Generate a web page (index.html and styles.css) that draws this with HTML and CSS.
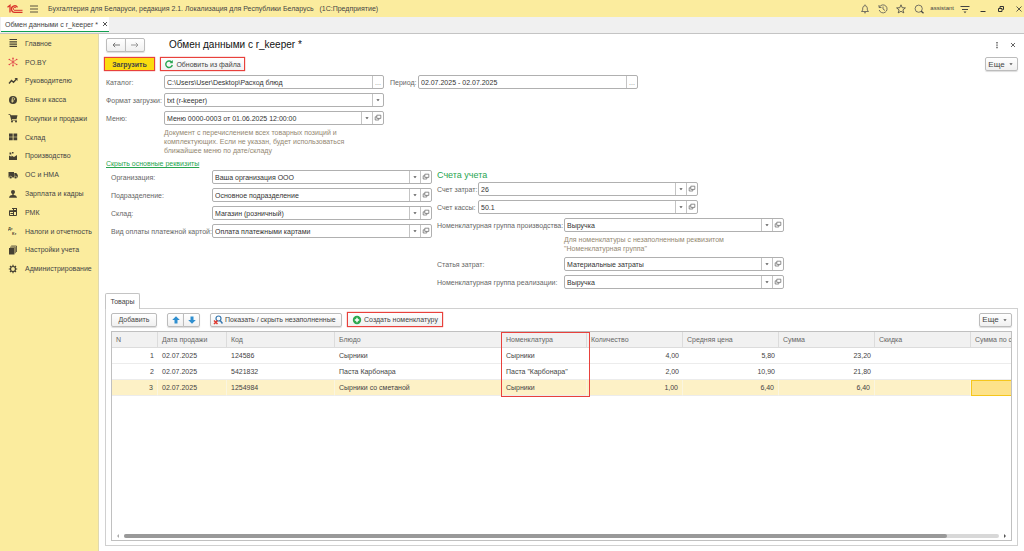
FILE: index.html
```
<!DOCTYPE html>
<html lang="ru">
<head>
    <meta charset="UTF-8">
    <meta name="viewport" content="width=device-width, initial-scale=1.0">
    <title>Обмен данными с r_keeper</title>
    <link rel="stylesheet" href="styles.css">
</head>
<body>

    <!-- Общие значки полей -->
    <svg class="defs" aria-hidden="true">
        <symbol id="arrow" viewBox="0 0 10 10"><path d="M3 4h4L5 6.500z" fill="#555"/></symbol>
        <symbol id="open" viewBox="0 0 10 10"><path d="M3.500 1.500h5v4h-5zM3.500 3.500h-2v4h4.500v-2" fill="none" stroke="#666" stroke-width="0.900"/></symbol>
    </svg>

    <!-- Заголовок приложения -->
    <header class="topbar">
        <svg class="logo" viewBox="0 0 16 10" role="img" aria-label="1С">
            <g fill="none" stroke="#d9332b" stroke-width="1.300">
                <path d="M0.500 3.200L3 1.300V8.500"/>
                <path d="M10.500 3.300A3.300 3.300 0 1 0 8 8.400H15.500"/>
                <path d="M9 4A1.500 1.500 0 1 0 8 6.300H15.500" stroke-width="1"/>
            </g>
        </svg>
        <button class="icon-btn" aria-label="Меню">
            <svg class="icon" viewBox="0 0 10 10"><path d="M1 2h8M1 5h8M1 8h8" stroke="#5a5340" fill="none"/></svg>
        </button>
        <span class="app-title">Бухгалтерия для Беларуси, редакция 2.1. Локализация для Республики Беларусь   (1С:Предприятие)</span>
        <div class="top-tools">
            <button class="icon-btn" aria-label="Уведомления"><svg class="icon" viewBox="0 0 10 10"><path d="M1.500 7.500h7L7.300 6V4Q7 1.800 5 1.600 3 1.800 2.700 4v2zM4 8.500q1 1 2 0M5 .5v1" fill="none" stroke="#555" stroke-width=".8"/></svg></button>
            <button class="icon-btn" aria-label="История"><svg class="icon" viewBox="0 0 10 10"><path d="M1.500 3A4 4 0 1 1 1.200 6M1 1v2.500h2.500M5 2.500V5l2 1.500" fill="none" stroke="#555" stroke-width=".8"/></svg></button>
            <button class="icon-btn" aria-label="Избранное"><svg class="icon" viewBox="0 0 10 10"><path d="M5 .8l1.200 2.900 3.200.2-2.500 2 .9 3L5 7.300 2.200 8.900l.9-3-2.500-2 3.200-.2z" fill="none" stroke="#444" stroke-width=".8"/></svg></button>
            <button class="icon-btn" aria-label="Поиск"><svg class="icon" viewBox="0 0 10 10"><circle cx="4.700" cy="4.700" r="3.600" fill="none" stroke="#555" stroke-width=".8"/><path d="M7 7l2.500 2.300" stroke="#444" stroke-width="1.300"/></svg></button>
            <span class="user">assistant</span>
            <button class="icon-btn" aria-label="Настройки"><svg class="icon" viewBox="0 0 10 10"><path d="M.5 2.500h9M2 5.500h6" stroke="#444"/><path d="M3.500 7.500h3L5 9.300z" fill="#444"/></svg></button>
            <button class="icon-btn" aria-label="Свернуть"><svg class="icon" viewBox="0 0 10 10"><path d="M2.500 7.500h5" stroke="#333"/></svg></button>
            <button class="icon-btn" aria-label="Восстановить"><svg class="icon" viewBox="0 0 10 10"><path d="M2.500 4.500h3.500v3H2.500zM4 4V2.500h3.500v3H6.500" fill="none" stroke="#333"/></svg></button>
            <button class="icon-btn" aria-label="Закрыть"><svg class="icon" viewBox="0 0 10 10"><path d="M2.500 2.500l5 5M7.500 2.500l-5 5" stroke="#333" stroke-width=".8"/></svg></button>
        </div>
    </header>

    <nav class="window-tabs">
        <div class="window-tab">
            <a href="#">Обмен данными с r_keeper *</a>
            <button class="tab-close" aria-label="Закрыть вкладку"><svg viewBox="0 0 6 6"><path d="M1 1l4 4M5 1L1 5" stroke="#555" stroke-width="1"/></svg></button>
        </div>
    </nav>

    <div class="workspace">
        <!-- Разделы -->
        <nav class="sidebar">
            <div class="sections">
                <a href="#"><svg class="icon" viewBox="0 0 10 10"><path d="M1.500 1.500h7.500M1.500 3.800h7.500M1.500 6.100h7.500M1.500 8.400h7.500" stroke="#454033" stroke-width="1.200"/></svg>Главное</a>
                <a href="#"><svg class="icon" viewBox="0 0 10 10"><path d="M5 5V1M5 5l3.500-2.500M5 5l3.500 2.500M5 5v4M5 5L1.500 7.500M5 5L1.500 2.500" stroke="#e0444a" stroke-width=".8"/><g fill="#e0444a"><circle cx="5" cy="1.200" r=".8"/><circle cx="8.700" cy="2.500" r=".8"/><circle cx="8.700" cy="7.500" r=".8"/><circle cx="5" cy="8.800" r=".8"/><circle cx="1.300" cy="7.500" r=".8"/><circle cx="1.300" cy="2.500" r=".8"/></g></svg>PO.BY</a>
                <a href="#"><svg class="icon" viewBox="0 0 10 10"><path d="M1 7.500l2.500-3 2 1.800L8.500 3" fill="none" stroke="#454033" stroke-width="1.300"/><path d="M6.500 2h3v3z" fill="#454033"/></svg>Руководителю</a>
                <a href="#"><svg class="icon" viewBox="0 0 10 10"><circle cx="5" cy="5" r="4" fill="#454033"/><path d="M4.300 7.700V2.700h1.400q1 .2 1 1.200t-1 1.200H3.400M3.400 6.300h2.300" fill="none" stroke="#fbec9e" stroke-width=".7"/></svg>Банк и касса</a>
                <a href="#"><svg class="icon" viewBox="0 0 10 10"><path d="M.5 1h1.700l.5 1.200h6.800L8.600 6H3.800l.2.800h4.800v.7H3.300L1.800 1.800H.5z" fill="#454033"/><circle cx="4" cy="8.500" r="1" fill="#454033"/><circle cx="8" cy="8.500" r="1" fill="#454033"/></svg>Покупки и продажи</a>
                <a href="#"><svg class="icon" viewBox="0 0 10 10"><path d="M1 1.500h3.700v3.200H1zM5.500 1.500h3.700v3.200H5.500zM1 5.300h3.700v3H1zM5.500 5.300h3.700v3H5.500z" fill="#454033"/></svg>Склад</a>
                <a href="#"><svg class="icon" viewBox="0 0 10 10"><path d="M1 9V4.500l2.500 1.200V4.500L6 6l3-2v5zM1.500 1.500h1.800v2H1.500zM4 1h1.500v1.500H4z" fill="#454033"/></svg>Производство</a>
                <a href="#"><svg class="icon" viewBox="0 0 10 10"><path d="M.5 2h5.500v5.500H.5zM6.300 3h2l1.500 2v2.500H6.300z" fill="#454033"/><g fill="#454033" stroke="#fbec9e" stroke-width=".5"><circle cx="2.700" cy="7.500" r="1.300"/><circle cx="7.600" cy="7.500" r="1.300"/></g></svg>ОС и НМА</a>
                <a href="#"><svg class="icon" viewBox="0 0 10 10"><circle cx="5" cy="3" r="2" fill="#454033"/><path d="M4.300 4h1.400v2q3 .3 3.300 2.800H1Q1.300 6.300 4.300 6z" fill="#454033"/></svg>Зарплата и кадры</a>
                <a href="#"><svg class="icon" viewBox="0 0 10 10"><path d="M1.500 4h4v4.500h-4zM4 1.500h4.500v7H4" fill="none" stroke="#454033"/><path d="M1 3.500h7v1.500H1zM5 1h4v3H5zM2.500 6h3.500v1H2.500z" fill="#454033"/><path d="M6 2h2v1H6z" fill="#fbec9e"/></svg>РМК</a>
                <a href="#"><svg class="icon dt" viewBox="0 0 10 10" aria-hidden="true"><text x="0" y="4">Дт</text><text x="4" y="9">Кт</text></svg>Налоги и отчетность</a>
                <a href="#"><svg class="icon" viewBox="0 0 10 10"><path d="M1 3h5.500v6.500H1z" fill="#454033"/><path d="M2 2.200h5.300v6M3.200 1h5.300v6" fill="none" stroke="#454033" stroke-width=".8"/></svg>Настройки учета</a>
                <a href="#"><svg class="icon" viewBox="0 0 10 10"><circle cx="5" cy="5" r="2.500" fill="none" stroke="#454033" stroke-width="1.200"/><path d="M5 .8v1.700M5 7.500v1.700M.8 5h1.700M7.500 5h1.700M2 2l1.200 1.200M6.800 6.800L8 8M8 2L6.800 3.200M3.200 6.800L2 8" stroke="#454033" stroke-width="1.200"/></svg>Администрирование</a>
            </div>
        </nav>

        <main class="form">
            <div class="title-row">
                <div class="btn-group">
                    <button class="btn" aria-label="Назад"><svg class="icon" viewBox="0 0 10 10"><path d="M9 5H2M4.200 2.800L2 5l2.200 2.200" fill="none" stroke="#777"/></svg></button>
                    <button class="btn" aria-label="Вперед"><svg class="icon" viewBox="0 0 10 10"><path d="M1 5h7M5.800 2.800L8 5 5.800 7.200" fill="none" stroke="#999"/></svg></button>
                </div>
                <h1>Обмен данными с r_keeper *</h1>
                <div class="title-tools">
                    <button class="icon-btn" aria-label="Действия"><svg class="icon" viewBox="0 0 10 10"><path d="M4.300 2h1.400v1.400H4.300zM4.300 4.400h1.400v1.400H4.300zM4.300 6.800h1.400v1.400H4.300z" fill="#555"/></svg></button>
                    <button class="icon-btn" aria-label="Закрыть форму"><svg class="icon" viewBox="0 0 10 10"><path d="M3 3l4 4M7 3L3 7" stroke="#666"/></svg></button>
                </div>
            </div>

            <div class="commands">
                <button class="btn primary marked">Загрузить</button>
                <button class="btn refresh marked">
                    <svg class="icon" viewBox="0 0 10 10"><path d="M7.500 3A3.300 3.300 0 1 0 8.300 6" fill="none" stroke="#27a550" stroke-width="1.400"/><path d="M8.800 1v3.300H5.500z" fill="#27a550"/></svg>Обновить из файла
                </button>
                <button class="btn more">Еще <svg class="caret"><use href="#arrow"/></svg></button>
            </div>

            <div class="rows">
                <div class="row">
                    <label class="label-main" for="catalog">Каталог:</label>
                    <div class="field"><input type="text" id="catalog" value="C:\Users\User\Desktop\Расход блюд"><button class="dots" aria-label="Выбрать каталог">...</button></div>
                    <label class="label-period" for="period">Период:</label>
                    <div class="field"><input type="text" id="period" value="02.07.2025 - 02.07.2025"><button class="dots" aria-label="Выбрать период">...</button></div>
                </div>
                <div class="row">
                    <label class="label-main" for="format">Формат загрузки:</label>
                    <div class="field select"><select id="format"><option>txt (r-keeper)</option></select><svg><use href="#arrow"/></svg></div>
                </div>
                <div class="row">
                    <label class="label-main" for="menu">Меню:</label>
                    <div class="field"><input type="text" id="menu" value="Меню 0000-0003 от 01.06.2025 12:00:00"><button aria-label="Список"><svg><use href="#arrow"/></svg></button><button aria-label="Открыть"><svg><use href="#open"/></svg></button></div>
                </div>
            </div>
            <p class="hint hint-menu">Документ с перечислением всех товарных позиций и<br>комплектующих. Если не указан, будет использоваться<br>ближайшее меню по дате/складу</p>
            <a class="toggle" href="#">Скрыть основные реквизиты</a>

            <div class="groups">
                <div class="rows requisites">
                    <div class="row">
                        <label for="org">Организация:</label>
                        <div class="field"><input type="text" id="org" value="Ваша организация ООО"><button aria-label="Список"><svg><use href="#arrow"/></svg></button><button aria-label="Открыть"><svg><use href="#open"/></svg></button></div>
                    </div>
                    <div class="row">
                        <label for="dept">Подразделение:</label>
                        <div class="field"><input type="text" id="dept" value="Основное подразделение"><button aria-label="Список"><svg><use href="#arrow"/></svg></button><button aria-label="Открыть"><svg><use href="#open"/></svg></button></div>
                    </div>
                    <div class="row">
                        <label for="store">Склад:</label>
                        <div class="field"><input type="text" id="store" value="Магазин (розничный)"><button aria-label="Список"><svg><use href="#arrow"/></svg></button><button aria-label="Открыть"><svg><use href="#open"/></svg></button></div>
                    </div>
                    <div class="row">
                        <label for="card">Вид оплаты платежной картой:</label>
                        <div class="field"><input type="text" id="card" value="Оплата платежными картами"><button aria-label="Список"><svg><use href="#arrow"/></svg></button><button aria-label="Открыть"><svg><use href="#open"/></svg></button></div>
                    </div>
                </div>

                <div class="accounts">
                    <h2>Счета учета</h2>
                    <div class="rows">
                        <div class="row">
                            <label class="label-account" for="cost">Счет затрат:</label>
                            <div class="field"><input type="text" id="cost" value="26"><button aria-label="Список"><svg><use href="#arrow"/></svg></button><button aria-label="Открыть"><svg><use href="#open"/></svg></button></div>
                        </div>
                        <div class="row">
                            <label class="label-account" for="cash">Счет кассы:</label>
                            <div class="field"><input type="text" id="cash" value="50.1"><button aria-label="Список"><svg><use href="#arrow"/></svg></button><button aria-label="Открыть"><svg><use href="#open"/></svg></button></div>
                        </div>
                        <div class="row">
                            <label class="label-group" for="prod">Номенклатурная группа производства:</label>
                            <div class="field"><input type="text" id="prod" value="Выручка"><button aria-label="Список"><svg><use href="#arrow"/></svg></button><button aria-label="Открыть"><svg><use href="#open"/></svg></button></div>
                        </div>
                        <p class="hint hint-group">Для номенклатуры с незаполненным реквизитом<br>"Номенклатурная группа"</p>
                        <div class="row">
                            <label class="label-group" for="item">Статья затрат:</label>
                            <div class="field"><input type="text" id="item" value="Материальные затраты"><button aria-label="Список"><svg><use href="#arrow"/></svg></button><button aria-label="Открыть"><svg><use href="#open"/></svg></button></div>
                        </div>
                        <div class="row">
                            <label class="label-group" for="sale">Номенклатурная группа реализации:</label>
                            <div class="field"><input type="text" id="sale" value="Выручка"><button aria-label="Список"><svg><use href="#arrow"/></svg></button><button aria-label="Открыть"><svg><use href="#open"/></svg></button></div>
                        </div>
                    </div>
                </div>
            </div>

            <!-- Табличная часть -->
            <div class="page-tabs"><button class="page-tab">Товары</button></div>
            <section class="panel">
                <div class="toolbar">
                    <button class="btn add">Добавить</button>
                    <div class="btn-group move">
                        <button class="btn" aria-label="Вверх"><svg class="icon" viewBox="0 0 10 10"><path d="M5 1.200l3.800 3.800H6.500v3.500h-3V5H1.200z" fill="#2f8fd0"/></svg></button>
                        <button class="btn" aria-label="Вниз"><svg class="icon" viewBox="0 0 10 10"><path d="M5 8.800L1.200 5h2.300V1.500h3V5h2.300z" fill="#2f8fd0"/></svg></button>
                    </div>
                    <button class="btn filter">
                        <svg class="icon" viewBox="0 0 10 10"><circle cx="5.500" cy="3.500" r="2.500" fill="none" stroke="#3878b0" stroke-width="1.200"/><path d="M7.200 5.500L9.500 8.500" stroke="#3878b0" stroke-width="1.500"/><path d="M1 5.500l3.500 3.500M4.500 5.500L1 9" stroke="#e0392f" stroke-width="1.500"/></svg>Показать / скрыть незаполненные
                    </button>
                    <button class="btn create marked">
                        <svg class="icon" viewBox="0 0 10 10"><circle cx="5" cy="5" r="4.200" fill="#2da84f"/><path d="M5 2.800v4.400M2.800 5h4.400" stroke="#fff" stroke-width="1.400"/></svg>Создать номенклатуру
                    </button>
                    <button class="btn more">Еще <svg class="caret"><use href="#arrow"/></svg></button>
                </div>

                <div class="grid">
                    <table>
                        <colgroup>
                            <col class="c-n"><col class="c-date"><col class="c-code"><col class="c-dish"><col class="c-item">
                            <col class="c-num"><col class="c-num"><col class="c-num"><col class="c-num"><col class="c-num">
                        </colgroup>
                        <thead>
                            <tr><th>N</th><th>Дата продажи</th><th>Код</th><th>Блюдо</th><th class="framed">Номенклатура</th><th>Количество</th><th>Средняя цена</th><th>Сумма</th><th>Скидка</th><th>Сумма по скидке</th></tr>
                        </thead>
                        <tbody>
                            <tr><td class="num">1</td><td>02.07.2025</td><td>124586</td><td>Сырники</td><td>Сырники</td><td class="num">4,00</td><td class="num">5,80</td><td class="num">23,20</td><td></td><td></td></tr>
                            <tr><td class="num">2</td><td>02.07.2025</td><td>5421832</td><td>Паста Карбонара</td><td>Паста "Карбонара"</td><td class="num">2,00</td><td class="num">10,90</td><td class="num">21,80</td><td></td><td></td></tr>
                            <tr class="selected"><td class="num">3</td><td>02.07.2025</td><td>1254984</td><td>Сырники со сметаной</td><td>Сырники</td><td class="num">1,00</td><td class="num">6,40</td><td class="num">6,40</td><td></td><td class="active"></td></tr>
                        </tbody>
                    </table>
                    <div class="scrollbar">
                        <span class="scroll-arrow left"></span>
                        <div class="track"><div class="thumb"></div></div>
                        <span class="scroll-arrow right"></span>
                    </div>
                </div>
            </section>
        </main>
    </div>

</body>
</html>
```
FILE: styles.css
```
* {
    box-sizing: border-box;
}

body {
    margin: 0;
    min-height: 100vh;
    display: flex;
    flex-direction: column;
    font-family: "Liberation Sans", Arial, sans-serif;
    font-size: 7px;
    line-height: 9px;
    color: #444444;
    background-color: #ffffff;
}

button, input, select {
    font: inherit;
    color: inherit;
    margin: 0;
    padding: 0;
    border: none;
    background: none;
}

button {
    cursor: pointer;
}

a {
    color: inherit;
    text-decoration: none;
}

.defs {
    display: none;
}

.icon {
    width: 10px;
    height: 10px;
    flex: none;
    display: block;
}

.icon-btn {
    width: 10px;
    height: 10px;
}

/* Верхняя панель */
.topbar {
    display: flex;
    align-items: center;
    height: 17px;
    padding: 0 0 0 7px;
    background-color: #fbec9e;
}

.logo {
    width: 16px;
    height: 10px;
    margin-right: 6px;
}

.app-title {
    margin-left: 9px;
    white-space: pre;
}

.top-tools {
    display: flex;
    align-items: center;
    gap: 8px;
    margin-left: auto;
}

.user {
    font-size: 6px;
    margin: 0 -2px;
}

/* Вкладки окон */
.window-tabs {
    display: flex;
    height: 17px;
    background-color: #f0f0f0;
    border-bottom: 1px solid #c4c4c4;
}

.window-tab {
    display: flex;
    align-items: center;
    gap: 4px;
    height: 15px;
    padding: 0 1px 0 4px;
    margin-left: 1px;
    background-color: #ffffff;
    border-bottom: 1px solid #12a050;
}

.tab-close {
    width: 6px;
    height: 6px;
}

.tab-close svg {
    display: block;
    width: 6px;
    height: 6px;
}

.workspace {
    display: flex;
    flex: 1;
}

/* Разделы */
.sidebar {
    flex: none;
    width: 99px;
    background-color: #fbec9e;
    border-right: 1px solid #e0d9b0;
}

.sections {
    display: flex;
    flex-direction: column;
    height: 244px;
}

.sections a {
    display: flex;
    align-items: center;
    flex: 1;
    gap: 7px;
    padding-left: 8px;
    white-space: nowrap;
}

.dt text {
    font-size: 4px;
    font-weight: bold;
    fill: #454033;
}

/* Форма */
.form {
    display: flex;
    flex-direction: column;
    flex: 1;
    min-width: 0;
    padding: 4px 6px 5px 7px;
}

.title-row {
    display: flex;
    align-items: center;
    height: 14px;
}

h1 {
    margin: 0 0 0 24px;
    font-size: 10px;
    line-height: 14px;
    font-weight: normal;
    color: #111111;
}

.title-tools {
    display: flex;
    gap: 6px;
    margin-left: auto;
}

.btn {
    display: flex;
    align-items: center;
    justify-content: center;
    gap: 4px;
    height: 14px;
    border: 1px solid #bcbcbc;
    border-radius: 2px;
    background: linear-gradient(#ffffff, #f0f0f0);
    box-shadow: 0 1px 1px #dddddd;
    white-space: nowrap;
}

.btn:hover {
    background: #eeeeee;
}

.btn-group {
    display: flex;
}

.btn-group .btn {
    width: 20px;
}

.btn-group .btn:first-child {
    border-radius: 2px 0 0 2px;
}

.btn-group .btn:last-child {
    margin-left: -1px;
    border-radius: 0 2px 2px 0;
}

.commands {
    display: flex;
    gap: 5px;
    margin: 5px 0 4px -2px;
}

.primary {
    width: 51px;
    font-weight: bold;
    background: #fbdc10;
}

.refresh {
    width: 85px;
    gap: 2px;
}

.marked {
    border: none;
    border-radius: 0;
    box-shadow: inset 0 0 0 1px #e8413c, 0 0 1px #e8413c;
}

.more {
    width: 33px;
    gap: 2px;
    margin-left: auto;
    font-size: 8px;
}

.caret {
    width: 8px;
    height: 8px;
}

.rows {
    display: flex;
    flex-direction: column;
    gap: 4px;
}

.row {
    display: flex;
    align-items: center;
    height: 14px;
}

.row label {
    flex: none;
    color: #666666;
    white-space: nowrap;
}

.label-main {
    width: 58px;
}

.label-period {
    width: 28px;
    margin-left: 6px;
}

.label-account {
    width: 41px;
}

.label-group {
    width: 127px;
}

.field {
    display: flex;
    width: 220px;
    height: 14px;
    border: 1px solid #b0b0b0;
    border-radius: 2px;
    background-color: #ffffff;
}

.field input, .field select {
    flex: 1;
    min-width: 0;
    padding: 0 2px;
    color: #333333;
    outline: none;
}

.field select {
    appearance: none;
}

.field button {
    display: flex;
    align-items: center;
    justify-content: center;
    width: 11px;
    border-left: 1px solid #c4c4c4;
}

.field .dots {
    color: #888888;
}

.field svg {
    width: 8px;
    height: 8px;
}

.field.select svg {
    width: 11px;
    height: 12px;
    padding: 2px 1px;
    border-left: 1px solid #c4c4c4;
    pointer-events: none;
}

.hint {
    margin: 0;
    color: #948872;
}

.hint-menu {
    margin: 3px 0 0 58px;
}

.hint-group {
    margin: -1px 0 0 127px;
}

.toggle {
    align-self: flex-start;
    margin: 4px 0 2px;
    color: #27a550;
    text-decoration: underline;
}

.groups {
    display: flex;
    gap: 5px;
}

.requisites {
    padding-left: 5px;
}

.requisites label {
    width: 101px;
}

h2 {
    margin: 0 0 2px;
    font-size: 9px;
    line-height: 10px;
    font-weight: normal;
    color: #27a550;
}

/* Товары */
.page-tabs {
    display: flex;
    margin: 4px 0 0 -1px;
}

.page-tab {
    height: 16px;
    width: 35px;
    margin-bottom: -1px;
    border: 1px solid #c4c4c4;
    border-bottom: none;
    border-radius: 2px 2px 0 0;
    background-color: #ffffff;
    z-index: 1;
}

.panel {
    display: flex;
    flex-direction: column;
    flex: 1;
    margin-left: -1px;
    padding: 3px 5px 4px;
    border: 1px solid #d0d0d0;
}

.toolbar {
    display: flex;
    align-items: center;
    height: 15px;
    margin-bottom: 4px;
}

.add {
    width: 46px;
}

.move {
    margin: 0 10px;
}

.move .btn {
    width: 17px;
}

.filter {
    justify-content: flex-start;
    width: 132px;
    gap: 2px;
    margin-right: 5px;
    padding-left: 2px;
}

.create {
    width: 96px;
    height: 15px;
    gap: 2px;
}

.grid {
    display: flex;
    flex-direction: column;
    justify-content: space-between;
    flex: 1;
    overflow: hidden;
    border: 1px solid #c0c0c0;
}

table {
    width: 955px;
    table-layout: fixed;
    border-collapse: separate;
    border-spacing: 0;
}

.c-n { width: 46px; }
.c-date { width: 69px; }
.c-code { width: 108px; }
.c-dish { width: 167px; }
.c-item { width: 85px; }
.c-num { width: 96px; }

th {
    height: 16px;
    padding: 0 4px;
    font-weight: normal;
    text-align: left;
    color: #666666;
    background-color: #f1f1f1;
    border-right: 1px solid #dcdcdc;
    border-bottom: 1px solid #dcdcdc;
    white-space: nowrap;
}

td {
    height: 16px;
    padding: 0 4px;
    border-bottom: 1px solid #ececec;
}

.num {
    text-align: right;
}

.selected td {
    background-color: #fdf1c6;
    border-right: 1px solid #faf5e0;
}

.selected .active {
    background-color: #fde28a;
    border: 1px solid #f5c61c;
}

/* Рамка вокруг заполненной колонки */
.framed {
    position: relative;
}

.framed::after {
    content: "";
    position: absolute;
    top: 0;
    left: -1px;
    width: 87px;
    height: 63px;
    border: 1px solid #e8413c;
    pointer-events: none;
}

.scrollbar {
    display: flex;
    align-items: center;
    gap: 5px;
    padding: 0 5px 2px;
}

.scroll-arrow {
    border: 2px solid transparent;
}

.scroll-arrow.left {
    border-right-color: #aaaaaa;
    border-left: none;
}

.scroll-arrow.right {
    border-left-color: #555555;
    border-right: none;
}

.track {
    flex: 1;
    height: 4px;
    border-radius: 2px;
    background-color: #d8d8d8;
}

.thumb {
    width: 94%;
    height: 4px;
    border-radius: 2px;
    background-color: #999999;
}
```
